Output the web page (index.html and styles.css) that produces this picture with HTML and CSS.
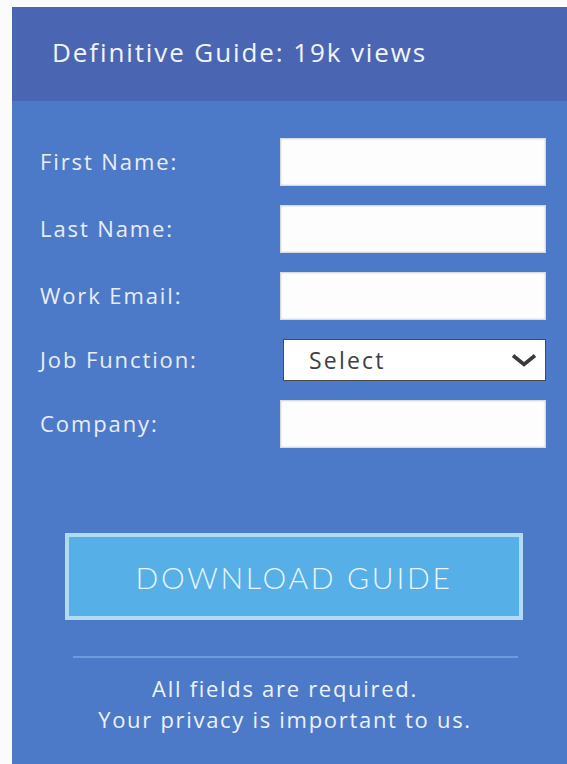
FILE: index.html
```html
<!DOCTYPE html>
<html lang="en">
<head>
<meta charset="utf-8">
<title>Definitive Guide</title>
<link rel="stylesheet" href="styles.css">
</head>
<body>
<section class="panel">
  <header class="panel-head">
    <h1 class="panel-title">Definitive Guide: 19k views</h1>
  </header>
  <form class="guide-form">
    <div class="fields">
      <label class="field-label" for="first">First Name:</label>
      <input class="field-input" id="first" type="text">
      <label class="field-label" for="last">Last Name:</label>
      <input class="field-input" id="last" type="text">
      <label class="field-label" for="email">Work Email:</label>
      <input class="field-input" id="email" type="email">
      <label class="field-label" for="job">Job Function:</label>
      <div class="field-select" id="job">
        <span class="select-value">Select</span>
        <svg class="select-chevron" width="26" height="14" viewBox="0 0 26 14" aria-hidden="true">
          <polyline points="2,2.5 13,11.5 24,2.5" fill="none" stroke="#3a3a3a" stroke-width="3.6" stroke-linejoin="miter"/>
        </svg>
      </div>
      <label class="field-label" for="company">Company:</label>
      <input class="field-input" id="company" type="text">
    </div>
    <button class="download-btn" type="button">DOWNLOAD GUIDE</button>
    <hr class="divider">
    <p class="note">All fields are required.<br>Your privacy is important to us.</p>
  </form>
</section>
</body>
</html>
```
FILE: styles.css
```css
html, body {
  margin: 0;
  padding: 0;
  background: #fbfbfb;
}

body {
  font-family: "Open Sans", Lato, sans-serif;
  overflow: hidden;
  height: 764px;
}

.panel {
  margin: 7px 0 0 12px;
  width: 555px;
  height: 757px;
  background: #4d7ac8;
}

.panel-head {
  height: 94px;
  background: #4a66b2;
  display: flex;
  align-items: center;
  padding-left: 40px;
}

.panel-title {
  margin: 0 0 4px;
  font-size: 26px;
  font-weight: 400;
  color: #f2f4fa;
  letter-spacing: 1.9px;
}

.guide-form {
  padding: 37px 21px 0 28px;
}

.fields {
  display: grid;
  grid-template-columns: 240px 266px;
  row-gap: 19px;
  align-items: center;
}

.field-label {
  font-size: 22px;
  color: #e9edf6;
  letter-spacing: 1.9px;
  margin-top: -3px;
}

.field-input {
  box-sizing: border-box;
  height: 48px;
  width: 266px;
  margin: 0;
  border: 1px solid #d6d9de;
  background: #fdfdfd;
  box-shadow: inset 0 0 2px rgba(120, 120, 130, 0.35);
}

.field-select {
  box-sizing: border-box;
  height: 42px;
  width: 263px;
  margin-left: 3px;
  border: 1px solid #4a4a4a;
  background: #fff;
  display: flex;
  align-items: center;
  justify-content: space-between;
  padding: 0 8px 0 25px;
}

.select-value {
  font-size: 23px;
  color: #3f3f3f;
  letter-spacing: 2.2px;
}

.select-chevron {
  display: block;
}

.download-btn {
  display: block;
  box-sizing: border-box;
  margin: 85px 0 0 25px;
  width: 458px;
  height: 87px;
  background: #56b0e7;
  border: 4px solid #b0dbf3;
  color: #eaf5fc;
  font-family: Lato, sans-serif;
  font-weight: 300;
  font-size: 30px;
  letter-spacing: 2.7px;
  padding: 0;
}

.divider {
  margin: 36px 0 0 33px;
  width: 445px;
  height: 0;
  border: 0;
  border-top: 2px solid #6b9ddd;
}

.note {
  margin: 15px 0 0 0;
  padding-left: 22px;
  width: 446px;
  text-align: center;
  font-size: 22px;
  line-height: 31px;
  color: #eef2fa;
  letter-spacing: 1.7px;
}
```
